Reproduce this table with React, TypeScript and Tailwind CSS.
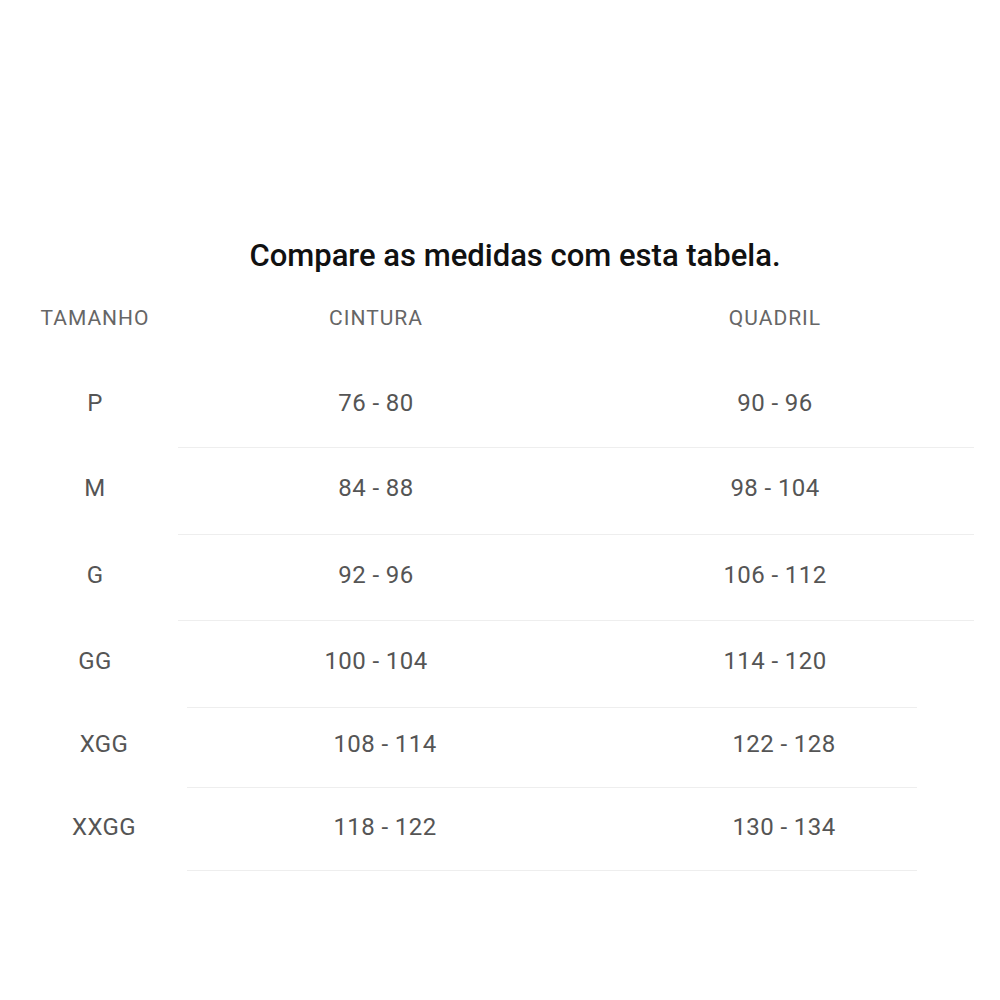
type SizeRow = {
  size: string;
  waist: string;
  hip: string;
  height: string;
  pad: string;
};

const mainRows: SizeRow[] = [
  { size: "M", waist: "84 - 88", hip: "98 - 104", height: "h-[87px]", pad: "pt-[26px]" },
  { size: "G", waist: "92 - 96", hip: "106 - 112", height: "h-[86px]", pad: "pt-[26px]" },
  { size: "GG", waist: "100 - 104", hip: "114 - 120", height: "h-[87px]", pad: "pt-[26px]" },
];

const extraRows: SizeRow[] = [
  { size: "XGG", waist: "108 - 114", hip: "122 - 128", height: "h-[80px]", pad: "pt-[22px]" },
  { size: "XXGG", waist: "118 - 122", hip: "130 - 134", height: "h-[83px]", pad: "pt-[25px]" },
];

function Cells({ row }: { row: SizeRow }) {
  return (
    <>
      <div className="w-[190px] text-center">{row.size}</div>
      <div className="w-[372px] text-center">{row.waist}</div>
      <div className="w-[426px] text-center">{row.hip}</div>
    </>
  );
}

export default function App() {
  return (
    <div className="min-h-[1000px] bg-white pt-[235px] font-['Roboto',sans-serif] text-[#555]">
      <h1 className="pl-[30px] text-center text-[31px] leading-[42px] font-medium text-[#111]">
        Compare as medidas com esta tabela.
      </h1>

      <div className="flex h-[81px] items-center pt-[3px] text-[21px] tracking-[1px] text-[#666]">
        <div className="w-[190px] text-center">TAMANHO</div>
        <div className="w-[372px] text-center">CINTURA</div>
        <div className="w-[426px] text-center">QUADRIL</div>
      </div>

      <div className="flex h-[89px] items-center text-[24px] tracking-[0.4px]">
        <Cells row={{ size: "P", waist: "76 - 80", hip: "90 - 96", height: "", pad: "" }} />
      </div>

      {mainRows.map((row) => (
        <div key={row.size} className={row.height}>
          <div className="ml-[178px] w-[796px] border-t border-[#eeeeee]" />
          <div className={`flex text-[24px] leading-[28px] tracking-[0.4px] ${row.pad}`}>
            <Cells row={row} />
          </div>
        </div>
      ))}

      <div className="ml-[9px]">
        {extraRows.map((row) => (
          <div key={row.size} className={row.height}>
            <div className="ml-[178px] w-[730px] border-t border-[#eeeeee]" />
            <div className={`flex text-[24px] leading-[28px] tracking-[0.4px] ${row.pad}`}>
              <Cells row={row} />
            </div>
          </div>
        ))}
        <div className="ml-[178px] w-[730px] border-t border-[#eeeeee]" />
      </div>
    </div>
  );
}
